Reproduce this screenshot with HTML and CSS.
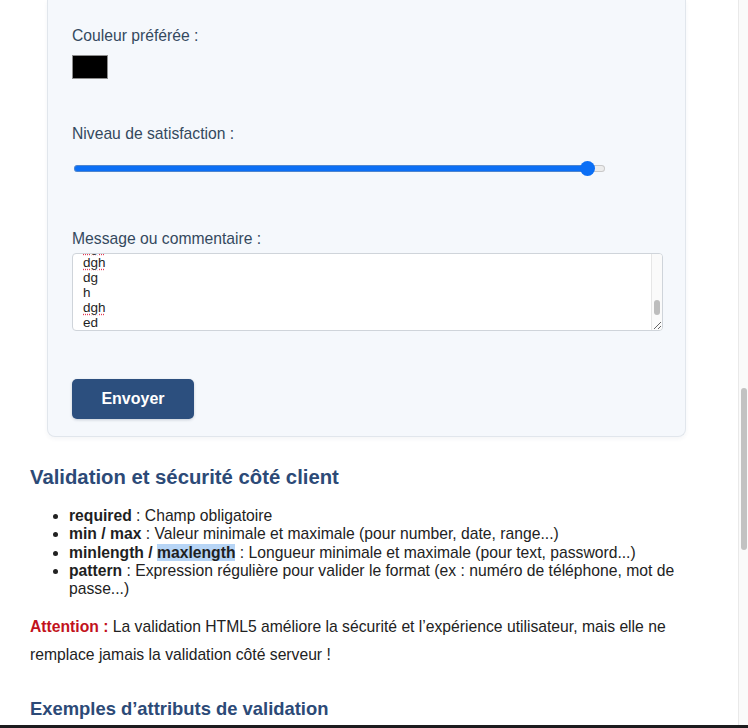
FILE: index.html
```html
<!DOCTYPE html>
<html lang="fr">
<head>
<meta charset="utf-8">
<title>Formulaire HTML5</title>
<link rel="stylesheet" href="styles.css">
</head>
<body>
<div class="window">
  <main class="page">
    <form class="card">
      <label class="label" for="couleur">Couleur préférée :</label>
      <input type="color" id="couleur" class="swatch" value="#000000">

      <label class="label label-satisfaction" for="satisfaction">Niveau de satisfaction :</label>
      <input type="range" id="satisfaction" class="slider" min="0" max="100" value="98" style="--v: 0.98">

      <label class="label label-message" for="message">Message ou commentaire :</label>
      <div class="textarea">
        <div class="textarea-content" id="message" role="textbox" aria-multiline="true">
          <div>hello</div>
          <div>test</div>
          <div>dg</div>
          <div>h</div>
          <div><span class="typo">dgh</span></div>
          <div>ed</div>
          <div>fr</div>
          <div>dg</div>
          <div>h</div>
          <div><span class="typo">dgh</span></div>
          <div>ed</div>
          <div>sd</div>
          <div>dg</div>
          <div>h</div>
          <div>ed</div>
          <div><span class="typo">dgh</span></div>
          <div><span class="typo">dgh</span></div>
          <div>dg</div>
          <div>h</div>
          <div><span class="typo">dgh</span></div>
          <div>ed</div>
        </div>
        <div class="textarea-bar" aria-hidden="true"><div class="textarea-thumb"></div></div>
      </div>

      <button type="submit" class="btn">Envoyer</button>
    </form>

    <h2 class="section-title">Validation et sécurité côté client</h2>
    <ul class="rules">
      <li><strong>required</strong> : Champ obligatoire</li>
      <li><strong>min / max</strong> : Valeur minimale et maximale (pour number, date, range...)</li>
      <li><strong>minlength / <span class="selected">maxlength</span></strong> : Longueur minimale et maximale (pour text, password...)</li>
      <li><strong>pattern</strong> : Expression régulière pour valider le format (ex : numéro de téléphone, mot de passe...)</li>
    </ul>

    <p class="note"><strong class="warn">Attention :</strong> La validation HTML5 améliore la sécurité et l’expérience utilisateur, mais elle ne remplace jamais la validation côté serveur !</p>

    <h3 class="sub-title">Exemples d’attributs de validation</h3>
  </main>
  <div class="scrollbar"><div class="scrollbar-thumb"></div></div>
</div>
<div class="screen-edge"></div>
<script src="script.js"></script>
</body>
</html>
```

FILE: script.js
```js
var box = document.getElementById('message');
box.scrollTop = box.scrollHeight;
```

FILE: styles.css
```css
html, body {
  margin: 0;
  padding: 0;
  height: 100%;
  overflow: hidden;
  background: #ffffff;
}

body {
  display: flex;
  flex-direction: column;
  font-family: "Liberation Sans", Arial, Helvetica, sans-serif;
  font-size: 15.7px;
  color: #222222;
}

.window {
  flex: 1;
  display: flex;
  min-height: 0;
}

.page {
  flex: 1;
  padding: 0 30px;
  overflow: hidden;
}

/* ---------- form card ---------- */
.card {
  width: 639px;
  box-sizing: border-box;
  margin: 0 0 0 17px;
  padding: 27px 24px 17px;
  background: #f5f8fc;
  border: 1px solid #e1e6ec;
  border-top: none;
  border-radius: 0 0 8px 8px;
  box-shadow: 0 2px 4px rgba(40, 60, 90, 0.05);
  display: flex;
  flex-direction: column;
  align-items: flex-start;
}

.label {
  display: block;
  line-height: 18px;
  color: #34495e;
}

.label-satisfaction {
  margin-top: 46px;
}

.label-message {
  margin-top: 54px;
}

.swatch {
  -webkit-appearance: none;
  appearance: none;
  width: 36px;
  height: 24px;
  margin: 10px 0 0 0;
  padding: 0;
  border: 1px solid #8d8d8d;
  background: #000000;
  cursor: pointer;
}

.swatch::-webkit-color-swatch-wrapper {
  padding: 0;
}

.swatch::-webkit-color-swatch {
  border: none;
}

.slider {
  -webkit-appearance: none;
  appearance: none;
  width: 531px;
  height: 15px;
  margin: 18px 0 0 2px;
  padding: 0;
  background: transparent;
}

.slider::-webkit-slider-runnable-track {
  height: 7px;
  border-radius: 4px;
  background: linear-gradient(to right,
    #0b6ff5 calc(7.5px + (100% - 15px) * var(--v)),
    #ececec calc(7.5px + (100% - 15px) * var(--v)));
  box-shadow: inset 0 0 0 1px rgba(160, 160, 160, 0.45);
}

.slider::-webkit-slider-thumb {
  -webkit-appearance: none;
  appearance: none;
  width: 15px;
  height: 15px;
  margin-top: -4px;
  border: none;
  border-radius: 50%;
  background: #0b6ff5;
}

/* textarea look-alike */
.textarea {
  width: 591px;
  height: 78px;
  box-sizing: border-box;
  margin-top: 5px;
  border: 1px solid #cfd4da;
  border-radius: 4px;
  background: #ffffff;
  display: flex;
  overflow: hidden;
  resize: both;
}

.textarea-content {
  flex: 1;
  padding-left: 10px;
  overflow: hidden;
  font-size: 13.5px;
  line-height: 15px;
  color: #1e1e1e;
}

.textarea-bar {
  width: 10px;
  flex-shrink: 0;
  background: #fafafa;
  border-left: 1px solid #e6e6e6;
}

.textarea-thumb {
  width: 6px;
  height: 15px;
  margin: 46px 0 0 2px;
  border-radius: 3px;
  background: #bdbdbd;
}

.typo {
  text-decoration: underline dotted #e23a55;
  text-underline-offset: 2px;
}

.btn {
  margin-top: 48px;
  width: 122px;
  height: 40px;
  border: none;
  border-radius: 5px;
  background: #2c4f7e;
  color: #ffffff;
  font-family: "Liberation Sans", Arial, Helvetica, sans-serif;
  font-size: 16px;
  font-weight: bold;
  box-shadow: 0 1px 3px rgba(20, 40, 70, 0.2);
  cursor: pointer;
}

/* ---------- text content ---------- */
.section-title {
  margin: 28px 0 18px;
  font-size: 20.3px;
  line-height: 24px;
  color: #2c4a77;
}

.rules {
  margin: 0;
  padding-left: 39px;
  line-height: 18.3px;
}

.rules strong {
  color: #1f1f1f;
}

.selected {
  background: #b7d5f6;
}

.note {
  margin: 14.5px 0 0;
  line-height: 28px;
  color: #222222;
}

.warn {
  color: #c2121c;
}

.sub-title {
  margin: 29px 0 0;
  font-size: 18.4px;
  line-height: 22px;
  color: #2c4a77;
}

/* ---------- browser chrome ---------- */
.scrollbar {
  width: 9px;
  flex-shrink: 0;
  background: #fafafa;
  border-left: 1px solid #e9e9e9;
}

.scrollbar-thumb {
  width: 6px;
  height: 162px;
  margin: 388px 0 0 2px;
  border-radius: 3px;
  background: #c2c2c2;
}

.screen-edge {
  height: 3px;
  flex-shrink: 0;
  background: #1c1c1e;
}
```
